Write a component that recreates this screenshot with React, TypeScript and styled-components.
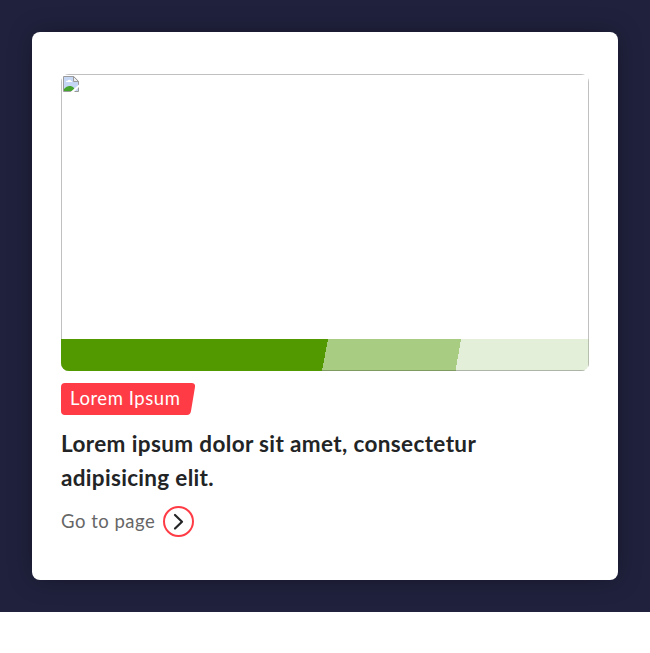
import React from 'react';
import styled, { createGlobalStyle } from 'styled-components';

const GlobalStyle = createGlobalStyle`
  * { box-sizing: border-box; }
  body { margin: 0; background: #fff; font-family: Lato, "Open Sans", sans-serif; }
`;

const Stage = styled.main`
  height: 612px;
  padding: 32px;
  background: #20213d;
`;

const Card = styled.article`
  width: 586px;
  height: 548px;
  padding: 42px 29px;
  border-radius: 8px;
  background: #fff;
  box-shadow: 0 0 24px rgba(0, 0, 0, 0.3);
`;

const Media = styled.div`
  position: relative;
  height: 297px;
  padding: 2px;
  border-radius: 8px;
  overflow: hidden;

  &::before {
    content: '';
    position: absolute;
    inset: 0;
    border: 1px solid #c0c0c0;
  }
`;

const MissingIcon = styled.svg`
  display: block;
`;

const Stripes = styled.svg`
  position: absolute;
  left: 0;
  bottom: 0;
  width: 528px;
  height: 32px;
`;

const Tag = styled.div`
  position: relative;
  display: flex;
  width: 135px;
  height: 32px;
  margin-top: 12px;
  padding-left: 9px;
  color: #fff;
  font-size: 18.5px;
  line-height: 30px;
  letter-spacing: 0.56px;
  white-space: nowrap;
`;

const TagShape = styled.svg`
  position: absolute;
  inset: 0;
`;

const TagText = styled.span`
  position: relative;
`;

const Title = styled.h2`
  margin: 12px 0 0;
  color: #222425;
  font-size: 22.5px;
  font-weight: 700;
  line-height: 34px;
`;

const TitleLine = styled.span<{ $tracking: number }>`
  display: block;
  white-space: nowrap;
  letter-spacing: ${({ $tracking }) => $tracking}px;
`;

const PageLink = styled.a`
  display: flex;
  align-items: center;
  height: 31px;
  margin-top: 11px;
  color: #666;
  font-size: 18.5px;
  letter-spacing: 0.5px;
  white-space: nowrap;
`;

const LinkText = styled.span`
  width: 102px;
  padding-bottom: 2px;
`;

export default function App() {
  return (
    <>
      <GlobalStyle />
      <Stage>
        <Card>
          <Media>
            <MissingIcon width="16" height="16" viewBox="0 0 16 16">
              <path d="M.5.5h10.2l4.8 4.8v10.2H.5z" fill="#c5d7f5" stroke="#9b9b9b" />
              <path d="M3 6c0-1 1-1.5 1.7-1.3C5.5 3 8 3.5 8 5c1 0 1.3.5 1.3 1z" fill="#fff" />
              <path d="M1 15v-2C4 9.5 8 9 11 12l1 3z" fill="#45a52f" />
              <path d="M10.5.5v5h5z" fill="#eee" stroke="#9b9b9b" />
              <path d="M7.5 16L16 8.5V11l-5 5z" fill="#fff" />
            </MissingIcon>
            <Stripes viewBox="0 0 528 32" shapeRendering="crispEdges">
              <path d="M0 0h528v32H0z" fill="#e4efda" />
              <path d="M0 0h400l-5.5 32H0z" fill="#a8cc81" />
              <path d="M261 31h267v1H261z" fill="#000" opacity=".24" />
              <path d="M527 0h1v32h-1z" fill="#000" opacity=".2" />
              <path d="M0 0h267l-6 32H0z" fill="#529900" />
            </Stripes>
          </Media>
          <Tag>
            <TagShape width="135" height="32" viewBox="0 0 135 32">
              <path d="M4 0h126.500q4 0 3.500 4l-4 24q-.6 4-4 4H4q-4 0-4-4V4q0-4 4-4z" fill="#ff3c46" />
            </TagShape>
            <TagText>Lorem Ipsum</TagText>
          </Tag>
          <Title>
            <TitleLine $tracking={0.37}>Lorem ipsum dolor sit amet, consectetur</TitleLine>
            <TitleLine $tracking={0.31}>adipisicing elit.</TitleLine>
          </Title>
          <PageLink>
            <LinkText>Go to page</LinkText>
            <svg width="31" height="31" viewBox="0 0 31 31" fill="none">
              <circle cx="15.5" cy="15.5" r="14.5" stroke="#ff3c46" strokeWidth="2" />
              <path d="M12 9l7 6.7-7 6.8" stroke="#222425" strokeWidth="2.2" strokeLinecap="round" strokeLinejoin="round" />
            </svg>
          </PageLink>
        </Card>
      </Stage>
    </>
  );
}
